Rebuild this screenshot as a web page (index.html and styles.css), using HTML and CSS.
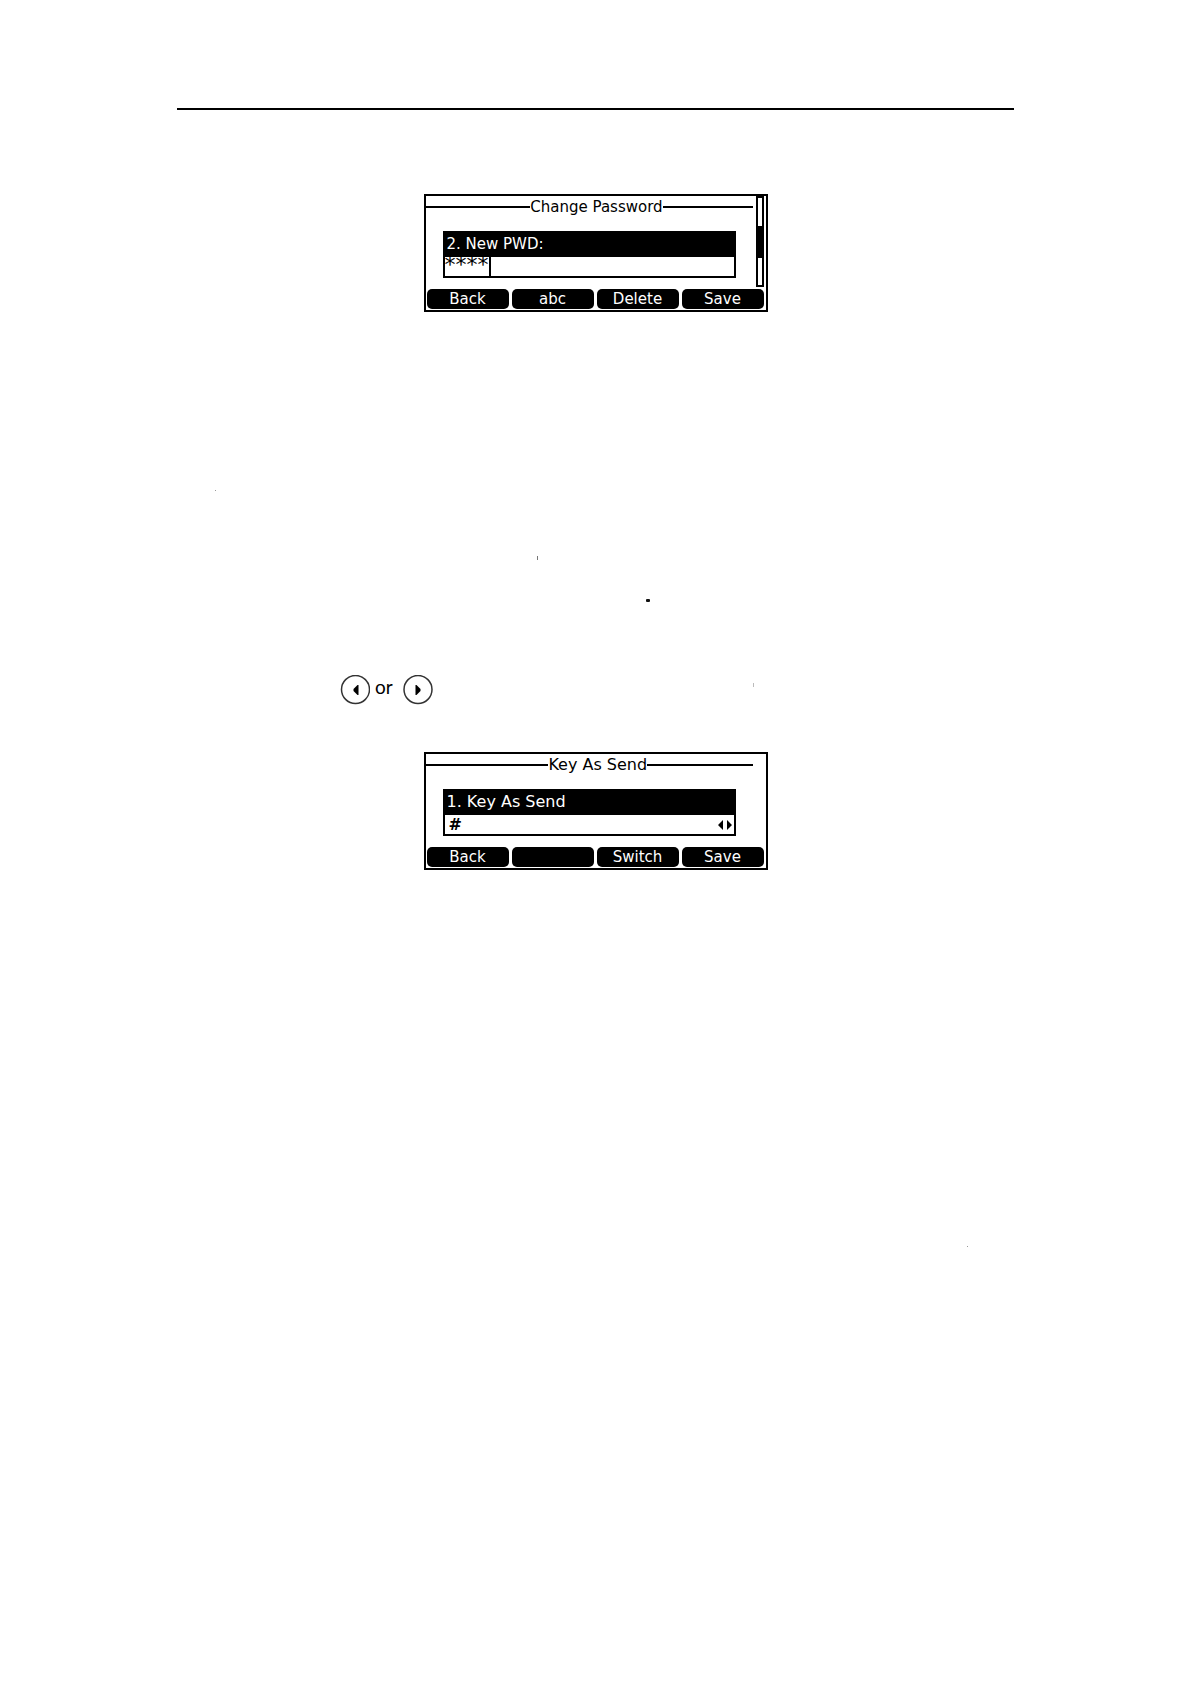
FILE: index.html
```html
<!DOCTYPE html>
<html lang="en">
<head>
<meta charset="utf-8">
<meta name="viewport" content="width=device-width, initial-scale=1">
<title>Change Password / Key As Send</title>
<link rel="stylesheet" href="styles.css">
</head>
<body>
<main class="page">
  <hr class="rule">

  <section class="screen">
    <div class="view">
      <div class="body">
        <h2 class="title">Change Password</h2>
        <div class="field">
          <label class="label" for="pwd">2. New PWD:</label>
          <div class="value"><input class="entry" id="pwd" type="text" value="****"></div>
        </div>
      </div>
      <div class="scrollbar"><div class="thumb"></div></div>
    </div>
    <div class="keys">
      <button class="key" type="button">Back</button>
      <button class="key" type="button">abc</button>
      <button class="key" type="button">Delete</button>
      <button class="key" type="button">Save</button>
    </div>
  </section>

  <div class="notes">
    <i class="speck speck-a"></i>
    <i class="speck speck-b"></i>
    <i class="speck speck-c"></i>
  </div>

  <div class="step">
    <svg class="nav" viewBox="0 0 30 30" aria-label="Left key"><circle cx="15.500" cy="14.500" r="14"/><path d="M18.500 10v10h-1l-4-4v-2l4-4z"/></svg>
    <span class="or">or</span>
    <svg class="nav" viewBox="0 0 30 30" aria-label="Right key"><circle cx="15" cy="14.500" r="14"/><path d="M12.500 10v10h1l4-4v-2l-4-4z"/></svg>
    <i class="speck speck-d"></i>
  </div>

  <section class="screen screen-large">
    <div class="view">
      <div class="body">
        <h2 class="title">Key As Send</h2>
        <div class="field">
          <label class="label" for="send">1. Key As Send</label>
          <div class="value">
            <select class="choice" id="send"><option>#</option><option>*</option></select>
            <svg class="arrows" viewBox="0 0 14 10" aria-hidden="true"><path d="M0 5l3-3 2-2v10l-2-2zM14 5l-3-3-2-2v10l2-2z"/></svg>
          </div>
        </div>
      </div>
      <div class="scrollbar empty"></div>
    </div>
    <div class="keys">
      <button class="key" type="button">Back</button>
      <button class="key" type="button" aria-label="Unassigned"></button>
      <button class="key" type="button">Switch</button>
      <button class="key" type="button">Save</button>
    </div>
  </section>

  <i class="speck speck-e"></i>
</main>
</body>
</html>
```
FILE: styles.css
```css
* { box-sizing: border-box; }

body {
  margin: 0;
  background: #fff;
  color: #000;
  font-family: "DejaVu Sans", sans-serif;
}

.page {
  min-height: 100vh;
  padding: 108px 176px 80px 177px;
}

.rule {
  margin: 0 0 84px;
  border: 0;
  border-top: 2px solid #000;
}

/* Phone display */
.screen {
  width: 344px;
  max-width: 100%;
  margin: 0 auto;
  border: 2px solid #000;
  padding-bottom: 1px;
  font-size: 15px;
}

.screen-large { font-size: 16px; }

.view {
  display: flex;
  padding-right: 2px;
}

.body { flex: 1; }

.title {
  display: flex;
  align-items: center;
  height: 22px;
  margin: 0 3px 0 0;
  font-size: inherit;
  font-weight: 400;
  line-height: 20px;
  white-space: nowrap;
}

.title::before,
.title::after {
  content: "";
  flex: 7;
  height: 2px;
  background: #000;
}

.title::after { flex-grow: 6; }

.field {
  margin: 13px 20px 0 17px;
  border: 2px solid #000;
}

.label {
  display: block;
  height: 24px;
  padding-left: 2px;
  background: #000;
  color: #fff;
  line-height: 22px;
}

.value {
  display: flex;
  align-items: center;
  justify-content: space-between;
  height: 19px;
}

.entry {
  width: 46px;
  height: 19px;
  padding: 0 0 4px;
  border: 0;
  border-right: 2px solid #000;
  background: none;
  font: 22px "DejaVu Sans", sans-serif;
  outline: none;
}

.choice {
  flex: 1;
  height: 19px;
  padding: 0 0 0 4px;
  border: 0;
  background: none;
  color: #000;
  font: bold 16px/19px "DejaVu Sans", sans-serif;
  appearance: none;
}

.arrows {
  width: 14px;
  height: 10px;
  margin-right: 2px;
}

.scrollbar {
  width: 8px;
  height: 91px;
  padding-top: 28px;
  border: 2px solid #000;
}

.scrollbar.empty { border-color: transparent; }

.thumb {
  height: 32px;
  background: #000;
}

.keys {
  display: grid;
  grid-template-columns: repeat(4, 1fr);
  gap: 3px;
  padding: 2px 2px 0 1px;
}

.key {
  height: 20px;
  padding: 0;
  border: 0;
  border-radius: 5px;
  background: #000;
  color: #fff;
  font: 15px/20px "DejaVu Sans", sans-serif;
}

/* Space between the two displays */
.notes {
  display: flex;
  flex-direction: column;
  height: 363px;
  padding-top: 178px;
}

.speck {
  display: block;
  width: 1px;
  height: 1px;
  background: #999;
}

.speck-a { margin-left: 38px; }
.speck-b { height: 4px; margin: 65px 0 0 43%; background: #777; }
.speck-c { width: 4px; height: 3px; margin: 39px 0 0 56%; border-radius: 1px; background: #111; }
.speck-d { height: 4px; margin: 0 260px 10px auto; background: #bbb; }
.speck-e { margin: 376px 46px 0 auto; }

.step {
  display: flex;
  align-items: center;
  height: 30px;
  margin-bottom: 47px;
  padding-left: 163px;
}

.nav {
  width: 30px;
  height: 30px;
}

.nav circle {
  fill: none;
  stroke: #333;
  stroke-width: 1.5;
}

.or {
  width: 33px;
  padding: 0 0 6px 5px;
  font: 19px/24px Lato, sans-serif;
}
```
